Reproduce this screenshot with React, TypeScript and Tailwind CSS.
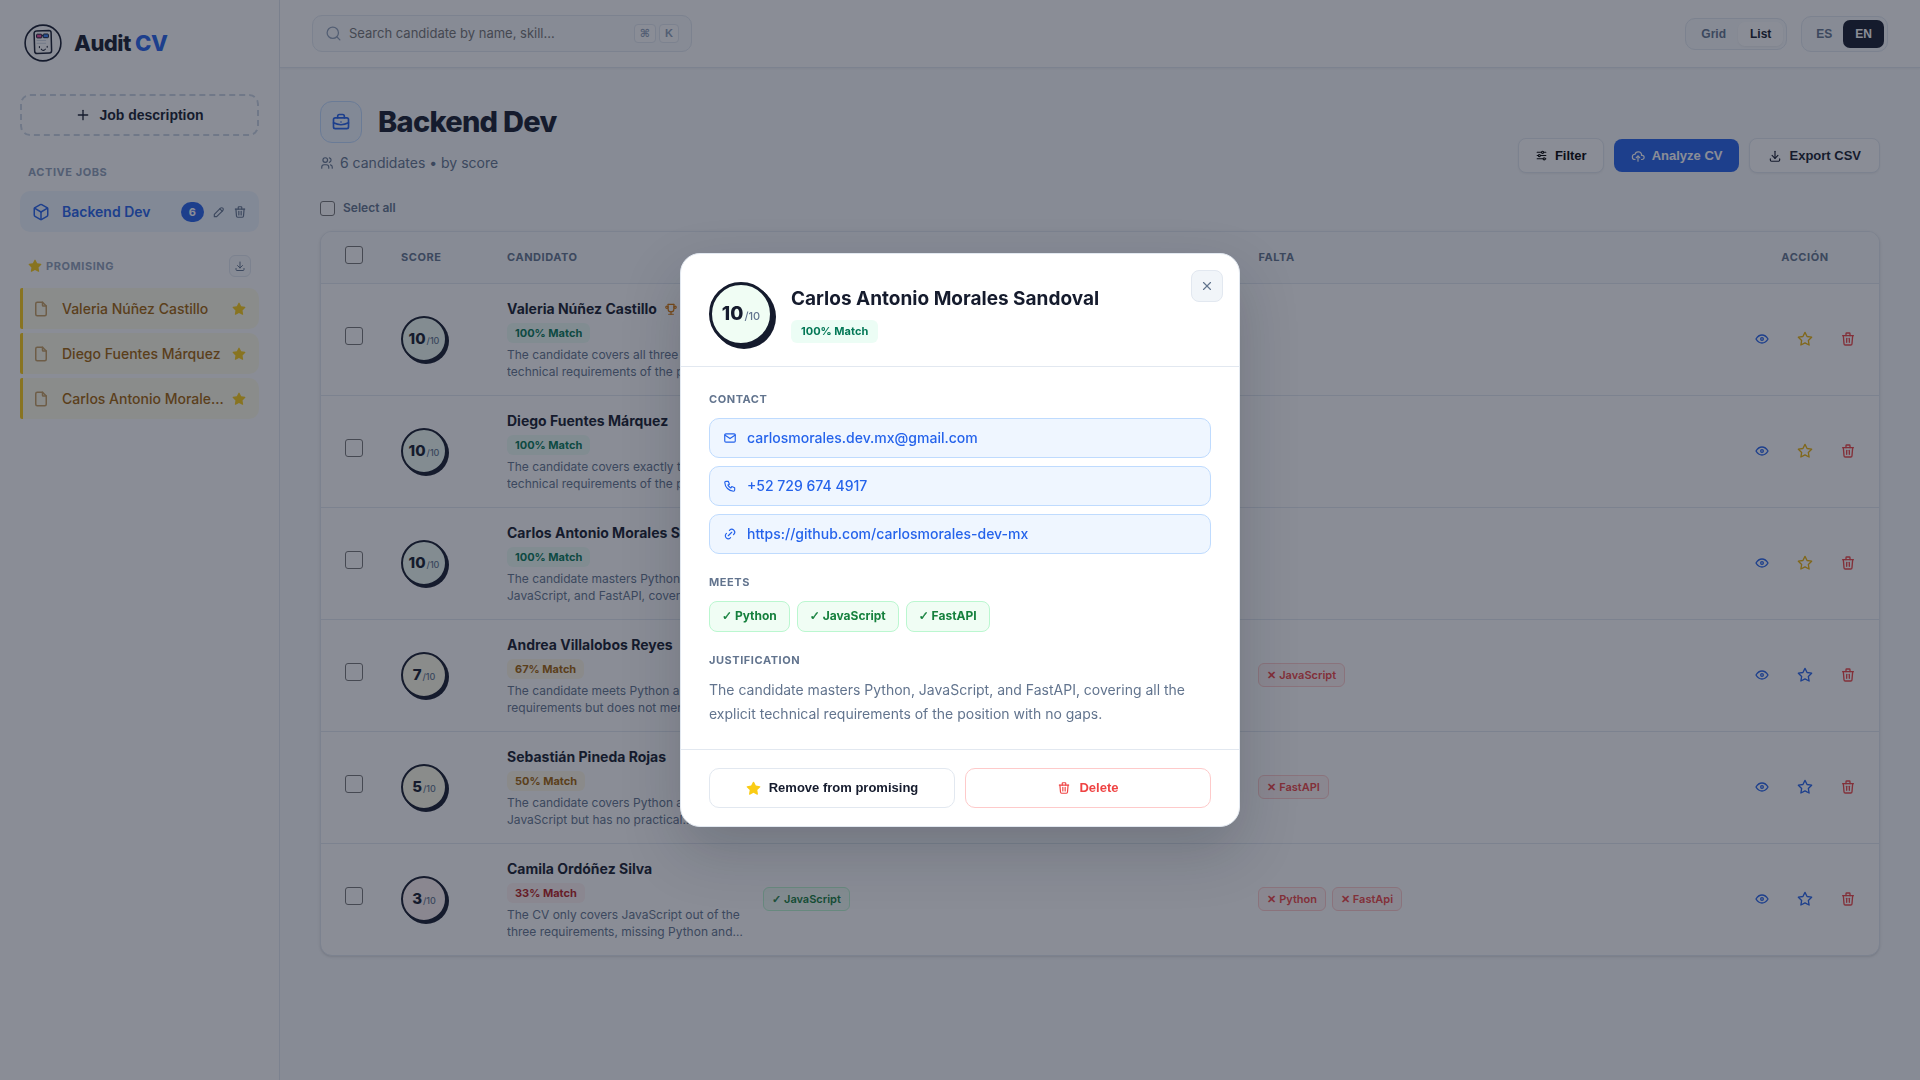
import type { ReactNode } from "react";
import clsx from "clsx";
import {
  TbAdjustmentsHorizontal, TbBriefcase, TbCloudUpload, TbCube, TbDownload, TbEye, TbFile, TbLink,
  TbMail, TbPencil, TbPhone, TbPlus, TbStar, TbStarFilled, TbTrash, TbTrophy, TbUsers, TbX,
} from "react-icons/tb";
import { Search } from "lucide-react";

type Tone = "good" | "mid" | "bad";

interface Candidate {
  name:      string;
  score:     number;
  match:     number;
  tone:      Tone;
  summary:   string;
  meets:     string[];
  missing:   string[];
  promising: boolean;
  top?:      boolean;
}

const CANDIDATES: Candidate[] = [
  {
    name: "Valeria Núñez Castillo", score: 10, match: 100, tone: "good", promising: true, top: true,
    summary: "The candidate covers all three explicit technical requirements of the position.",
    meets: ["Python", "JavaScript", "FastAPI"], missing: [],
  },
  {
    name: "Diego Fuentes Márquez", score: 10, match: 100, tone: "good", promising: true,
    summary: "The candidate covers exactly the three technical requirements of the position.",
    meets: ["Python", "JavaScript", "FastAPI"], missing: [],
  },
  {
    name: "Carlos Antonio Morales Sandoval", score: 10, match: 100, tone: "good", promising: true,
    summary: "The candidate masters Python, JavaScript, and FastAPI, covering all the explicit technical requirements of the position with no gaps.",
    meets: ["Python", "JavaScript", "FastAPI"], missing: [],
  },
  {
    name: "Andrea Villalobos Reyes", score: 7, match: 67, tone: "mid", promising: false,
    summary: "The candidate meets Python and FastAPI requirements but does not mention JavaScript.",
    meets: ["Python", "FastAPI"], missing: ["JavaScript"],
  },
  {
    name: "Sebastián Pineda Rojas", score: 5, match: 50, tone: "mid", promising: false,
    summary: "The candidate covers Python and some JavaScript but has no practical experience with FastAPI.",
    meets: ["Python", "JavaScript"], missing: ["FastAPI"],
  },
  {
    name: "Camila Ordóñez Silva", score: 3, match: 33, tone: "bad", promising: false,
    summary: "The CV only covers JavaScript out of the three requirements, missing Python and FastAPI completely.",
    meets: ["JavaScript"], missing: ["Python", "FastApi"],
  },
];

const CONTACTS = [
  { icon: TbMail,  text: "carlosmorales.dev.mx@gmail.com",        href: "mailto:carlosmorales.dev.mx@gmail.com" },
  { icon: TbPhone, text: "+52 729 674 4917",                      href: "tel:+527296744917" },
  { icon: TbLink,  text: "https://github.com/carlosmorales-dev-mx", href: "https://github.com/carlosmorales-dev-mx" },
];

const SCORE_BG: Record<Tone, string> = {
  good: "bg-[#f0fdf4]",
  mid:  "bg-[#fefce8]",
  bad:  "bg-[#fef2f2]",
};

const MATCH_TONE: Record<Tone, string> = {
  good: "bg-[#ecfdf5] text-[#047857]",
  mid:  "bg-[#fef9e7] text-[#a16207]",
  bad:  "bg-[#fef2f2] text-[#b91c1c]",
};

const ARIAL = "font-['Liberation_Sans',Arial,sans-serif] font-bold";
const LABEL = "text-[11px] leading-[17px] font-bold uppercase tracking-wider";
const CHECKBOX = "appearance-none rounded-[3px] border border-[#767676] bg-white";

function Logo() {
  return (
    <svg width="38" height="38" viewBox="0 0 38 38" fill="none" aria-hidden="true">
      <circle cx="19" cy="19" r="17.9" stroke="#151b2d" strokeWidth="1.6" />
      <path d="M12.3 7.1 24.9 6.6a2.2 2.2 0 0 1 2.2 2.1l.5 18a2.2 2.2 0 0 1-2.1 2.2l-12.6.6a2.2 2.2 0 0 1-2.2-2.1l-.6-18a2.2 2.2 0 0 1 2.2-2.3Z" stroke="#151b2d" strokeWidth="1.5" />
      <rect x="12.6" y="10.2" width="5.2" height="3.7" rx=".7" fill="#ec4899" stroke="#151b2d" strokeWidth="1" />
      <rect x="19.2" y="10" width="5.2" height="3.7" rx=".7" fill="#3b82f6" stroke="#151b2d" strokeWidth="1" />
      <path d="M17.8 11.6h1.4" stroke="#151b2d" strokeWidth="1" />
      <path d="M12.6 16.5h9.5M12.6 19.3h9.5" stroke="#cbd5e1" strokeWidth=".9" />
      <path d="M15.4 22.6v1M23.2 22.3v1M17.3 25.2c1 1.500 3 1.500 4 0" stroke="#151b2d" strokeWidth="1.1" strokeLinecap="round" />
    </svg>
  );
}

function ScoreCircle({ score, tone, large }: { score: number; tone: Tone; large?: boolean }) {
  return (
    <div
      className={clsx(
        "flex shrink-0 items-center justify-center rounded-full border-[#151b2d]",
        SCORE_BG[tone],
        large ? "size-16 border-3 shadow-[3px_3px_0_#151b2d]" : "size-[46px] border-2 shadow-[2px_2px_0_#151b2d]",
      )}
    >
      <span className="flex items-baseline gap-px">
        <span className={clsx("font-extrabold text-[#151b2d]", large ? "text-[19px]" : "text-[15px]")}>{score}</span>
        <span className={clsx("font-medium text-slate-500", large ? "text-[11px]" : "text-[9px]")}>/10</span>
      </span>
    </div>
  );
}

function Mark({ ok }: { ok?: boolean }) {
  if (!ok) return <span>✕</span>;
  return <span className="font-['Liberation_Sans','DejaVu_Sans',sans-serif] font-bold [-webkit-text-stroke-width:0.4px]">✓</span>;
}

function Tag({ ok, children }: { ok?: boolean; children: ReactNode }) {
  return (
    <span
      className={clsx(
        "rounded-md border px-2 text-[11px] leading-[22px] font-semibold",
        ok ? "border-[#bbf7d0] bg-[#f0fdf4] text-[#15803d]" : "border-[#fecaca] bg-[#fef2f2] text-[#ef4444]",
      )}
    >
      <Mark ok={ok} /> {children}
    </span>
  );
}

function Sidebar() {
  return (
    <aside className="flex w-[280px] shrink-0 flex-col border-r border-slate-200 bg-white px-5 pt-6">
      <div className="flex items-center gap-3 pl-1">
        <Logo />
        <span className="text-[22px] leading-[38px] font-extrabold tracking-tight text-[#151b2d]">
          Audit <span className="text-[#2563eb]">CV</span>
        </span>
      </div>

      <button className={clsx(ARIAL, "mt-8 flex h-[42px] items-center justify-center gap-2 rounded-[10px] border-2 border-dashed border-slate-300 text-sm text-[#151b2d]")}>
        <TbPlus size={16} /> Job description
      </button>

      <h2 className={clsx(LABEL, "mt-7 mb-2.5 pl-2 text-slate-400")}>Active jobs</h2>
      <div className="flex h-[41px] items-center rounded-[10px] bg-[#eff6ff] px-3">
        <TbCube size={18} className="text-[#2563eb]" />
        <span className="ml-3 flex-1 text-sm font-semibold text-[#2563eb]">Backend Dev</span>
        <span className="rounded-full bg-[#2563eb] px-2 text-[11px] leading-5 font-bold text-white">6</span>
        <button aria-label="Edit job" className="ml-2 text-slate-500"><TbPencil size={14} /></button>
        <button aria-label="Delete job" className="ml-[7px] text-slate-500"><TbTrash size={14} /></button>
      </div>

      <div className="mt-[23px] mb-[11px] flex items-center justify-between pr-2 pl-2">
        <h2 className={clsx(LABEL, "flex items-center gap-1 text-slate-400")}>
          <TbStarFilled size={14} className="text-[#facc15]" /> Promising
        </h2>
        <button aria-label="Download promising" className="flex size-[22px] items-center justify-center rounded-md border border-slate-200 bg-slate-50 text-slate-500">
          <TbDownload size={12} />
        </button>
      </div>
      <ul className="flex flex-col gap-1">
        {CANDIDATES.filter((c) => c.promising).map((c) => (
          <li key={c.name} className="flex h-[41px] items-center rounded-r-[10px] rounded-l-[2px] border-l-3 border-[#facc15] bg-[#fefce8] pr-[13px] pl-[9px] text-[#a16207]">
            <TbFile size={18} className="shrink-0 opacity-60" />
            <span className="ml-3 min-w-0 flex-1 truncate text-sm font-medium">{c.name}</span>
            <TbStarFilled size={14} className="ml-[7px] shrink-0 text-[#facc15]" />
          </li>
        ))}
      </ul>
    </aside>
  );
}

function TopBar() {
  const kbd = "rounded border border-slate-200 bg-white px-[5px] font-['Liberation_Sans','DejaVu_Sans',sans-serif]";
  return (
    <header className="flex h-[68px] items-center justify-between border-b border-slate-200 bg-white px-8 shadow-xs">
      <label className="flex h-[37px] w-[380px] items-center rounded-[10px] border border-slate-200 bg-slate-50 px-3">
        <Search size={17} strokeWidth={1.8} className="shrink-0 text-slate-400" />
        <input
          type="text"
          aria-label="Search candidates"
          placeholder="Search candidate by name, skill..."
          className="ml-[7px] min-w-0 flex-1 text-[13px] placeholder:text-[#757575]"
        />
        <span className="flex gap-[3px] text-[11px] leading-[17px] font-bold text-slate-400">
          <kbd className={kbd}>⌘</kbd>
          <kbd className={kbd}>K</kbd>
        </span>
      </label>

      <div className={clsx(ARIAL, "flex items-center gap-3.5 text-xs text-slate-500")}>
        <div className="flex h-8 rounded-[10px] border border-slate-200 bg-slate-50 p-[3px]">
          <button className="px-3">Grid</button>
          <button className="rounded-[7px] bg-white px-3 text-[#151b2d] shadow-xs">List</button>
        </div>
        <div className="flex h-9 rounded-[10px] border border-slate-200 bg-slate-50 p-[3px]">
          <button className="px-[11px]">ES</button>
          <button className="rounded-[7px] bg-[#151b2d] px-3 text-white">EN</button>
        </div>
      </div>
    </header>
  );
}

function PageHeading() {
  const btn = clsx(ARIAL, "flex items-center gap-[7px] rounded-lg text-[13px]");
  return (
    <div className="flex items-end justify-between">
      <div>
        <div className="flex items-center gap-4">
          <div className="flex size-[42px] items-center justify-center rounded-xl border border-[#bfdbfe] bg-[#eff6ff] text-[#2563eb]">
            <TbBriefcase size={20} />
          </div>
          <h1 className="text-[29px] leading-[42px] font-extrabold tracking-tight text-[#151b2d]">Backend Dev</h1>
        </div>
        <p className="mt-2 flex items-center gap-1.5 text-sm leading-6 text-slate-500">
          <TbUsers size={14} /> 6 candidates • by score
        </p>
      </div>
      <div className="flex items-center gap-2.5 pb-0.5">
        <button className={clsx(btn, "h-[35px] border border-slate-200 bg-white px-4 text-black shadow-xs")}>
          <TbAdjustmentsHorizontal size={13} /> Filter
        </button>
        <button className={clsx(btn, "h-[33px] bg-[#2563eb] px-[17px] text-white")}>
          <TbCloudUpload size={14} className="shrink-0" /> Analyze CV
        </button>
        <button className={clsx(btn, "h-[35px] border border-slate-200 bg-white px-[18px] text-[#151b2d] shadow-xs")}>
          <TbDownload size={14} /> Export CSV
        </button>
      </div>
    </div>
  );
}

function CandidateRow({ c }: { c: Candidate }) {
  return (
    <tr className="h-28 border-b border-slate-200 last:border-b-0">
      <td className="pl-6">
        <input type="checkbox" aria-label={`Select ${c.name}`} className={clsx(CHECKBOX, "size-[18px]")} />
      </td>
      <td className="pl-3.5"><ScoreCircle score={c.score} tone={c.tone} /></td>
      <td className="pr-1 pl-3.5">
        <div className="flex items-center gap-[7px] text-sm leading-5 font-bold whitespace-nowrap text-[#151b2d]">
          {c.name}
          {c.top && <TbTrophy size={14} className="text-[#d97706]" />}
        </div>
        <span className={clsx("mt-1 mb-[3px] block w-fit rounded-md px-2 text-[11px] leading-5 font-bold", MATCH_TONE[c.tone])}>
          {c.match}% Match
        </span>
        <p className="line-clamp-2 text-xs leading-[17px] text-slate-500">{c.summary}</p>
      </td>
      <td className="pl-3.5">
        <div className="flex gap-1.5">{c.meets.map((s) => <Tag key={s} ok>{s}</Tag>)}</div>
      </td>
      <td className="pl-3.5">
        <div className="flex gap-1.5">{c.missing.map((s) => <Tag key={s}>{s}</Tag>)}</div>
      </td>
      <td>
        <div className="flex justify-center gap-2">
          <button aria-label="View" className="flex size-[35px] items-center justify-center text-[#2563eb]"><TbEye size={16} /></button>
          <button aria-label="Promising" className={clsx("flex size-[35px] items-center justify-center", c.promising ? "text-[#eab308]" : "text-[#2563eb]")}>
            <TbStar size={16} />
          </button>
          <button aria-label="Delete" className="flex size-[35px] items-center justify-center text-[#ef4444]"><TbTrash size={16} /></button>
        </div>
      </td>
    </tr>
  );
}

function CandidateTable() {
  return (
    <div className="mt-[13px] overflow-hidden rounded-xl border border-slate-200 bg-white shadow-sm">
      <table className="w-full table-fixed text-left">
        <colgroup>
          <col className="w-[66px]" />
          <col className="w-[106px]" />
          <col className="w-[256px]" />
          <col className="w-[31.8%]" />
          <col />
          <col className="w-[148px]" />
        </colgroup>
        <thead className="bg-slate-50 text-[11px] font-bold tracking-wider text-slate-500 uppercase">
          <tr className="h-[51px] border-b border-slate-200">
            <th className="pl-6">
              <input type="checkbox" aria-label="Select every row" className={clsx(CHECKBOX, "size-[18px]")} />
            </th>
            <th className="pl-3.5">Score</th>
            <th className="pl-3.5">Candidato</th>
            <th className="pl-3.5">Cumple</th>
            <th className="pl-3.5">Falta</th>
            <th className="text-center">Acción</th>
          </tr>
        </thead>
        <tbody>{CANDIDATES.map((c) => <CandidateRow key={c.name} c={c} />)}</tbody>
      </table>
    </div>
  );
}

function CandidateModal() {
  return (
    <div className="fixed inset-0 flex items-center justify-center bg-[#151b2d]/50">
      <div role="dialog" aria-label="Candidate detail" className="relative w-full max-w-[560px] rounded-[20px] border border-slate-200 bg-white shadow-[0_24px_60px_rgba(15,23,42,0.2)]">
        <button aria-label="Close" className="absolute top-4 right-4 flex size-8 items-center justify-center rounded-lg border border-slate-200 bg-slate-100 text-slate-500">
          <TbX size={14} />
        </button>

        <div className="flex items-center gap-[18px] border-b border-slate-200 px-7 pt-7 pb-5">
          <ScoreCircle score={10} tone="good" large />
          <div>
            <h2 className="text-[19px] leading-7 font-bold text-[#151b2d]">Carlos Antonio Morales Sandoval</h2>
            <span className={clsx("mt-[7px] block w-fit rounded-md px-2.5 text-[11px] leading-[23px] font-bold", MATCH_TONE.good)}>
              100% Match
            </span>
          </div>
        </div>

        <div className="flex flex-col gap-5 px-7 pt-6 pb-[23px]">
          <section>
            <h3 className={clsx(LABEL, "text-slate-500")}>Contact</h3>
            <div className="mt-2.5 flex flex-col gap-2">
              {CONTACTS.map(({ icon: Icon, text, href }) => (
                <a key={href} href={href} className="flex h-10 items-center gap-2.5 rounded-[10px] border border-[#bfdbfe] bg-[#eff6ff] px-[13px] text-sm font-medium text-[#2563eb]">
                  <Icon size={14} /> {text}
                </a>
              ))}
            </div>
          </section>

          <section>
            <h3 className={clsx(LABEL, "text-slate-500")}>Meets</h3>
            <div className="mt-2.5 flex h-[31px] gap-[7px]">
              {["Python", "JavaScript", "FastAPI"].map((s) => (
                <span key={s} className="rounded-lg border border-[#bbf7d0] bg-[#f0fdf4] px-3 text-xs leading-[28px] font-bold text-[#15803d]">
                  <Mark ok /> {s}
                </span>
              ))}
            </div>
          </section>

          <section>
            <h3 className={clsx(LABEL, "text-slate-500")}>Justification</h3>
            <p className="mt-[9px] text-sm leading-6 text-slate-500">
              The candidate masters Python, JavaScript, and FastAPI, covering all the explicit technical requirements of
              the position with no gaps.
            </p>
          </section>
        </div>

        <div className={clsx(ARIAL, "grid grid-cols-2 gap-2.5 border-t border-slate-200 px-7 py-[18px] text-[13px]")}>
          <button className="flex h-10 items-center justify-center gap-2 rounded-[10px] border border-slate-200 text-[#151b2d]">
            <TbStarFilled size={15} className="text-[#facc15]" /> Remove from promising
          </button>
          <button className="flex h-10 items-center justify-center gap-2 rounded-[10px] border border-[#fecaca] text-[#ef4444]">
            <TbTrash size={14} /> Delete
          </button>
        </div>
      </div>
    </div>
  );
}

export default function App() {
  return (
    <div className="flex min-h-screen bg-slate-50 font-['Inter',sans-serif]">
      <Sidebar />
      <div className="min-w-0 flex-1">
        <TopBar />
        <main className="px-10 pt-[33px] pb-10">
          <PageHeading />
          <label className="mt-[23px] flex w-fit items-center gap-2 text-xs leading-5 font-semibold text-slate-500">
            <input type="checkbox" className={clsx(CHECKBOX, "size-[15px]")} /> Select all
          </label>
          <CandidateTable />
        </main>
      </div>
      <CandidateModal />
    </div>
  );
}
